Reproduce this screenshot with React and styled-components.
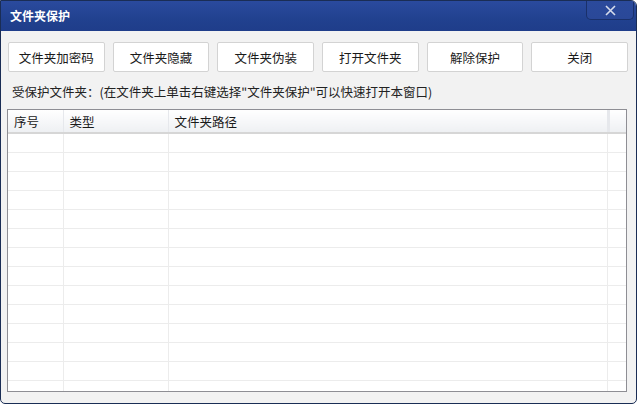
import React from "react";
import styled, { createGlobalStyle } from "styled-components";

const buttons = ["文件夹加密码", "文件夹隐藏", "文件夹伪装", "打开文件夹", "解除保护", "关闭"];
const rows = Array.from({ length: 14 });

export default function App() {
    return (
        <>
            <GlobalStyle />
            <Window>
                <TitleBar>
                    <Title>文件夹保护</Title>
                    <CloseButton>
                        <svg width="11" height="11" viewBox="0 0 11 11">
                            <path d="M1 1 L10 10 M10 1 L1 10" stroke="#d6dcec" strokeWidth="1.6" />
                        </svg>
                    </CloseButton>
                </TitleBar>
                <Body>
                    <Toolbar>
                        {buttons.map((b) => (
                            <Button key={b}>{b}</Button>
                        ))}
                    </Toolbar>
                    <Hint>受保护文件夹：(在文件夹上单击右键选择"文件夹保护"可以快速打开本窗口)</Hint>
                    <ListBox>
                        <Table>
                            <colgroup>
                                <col style={{ width: 55 }} />
                                <col style={{ width: 105 }} />
                                <col style={{ width: 439 }} />
                                <col />
                            </colgroup>
                            <thead>
                                <tr>
                                    <Th>序号</Th>
                                    <Th>类型</Th>
                                    <Th>文件夹路径</Th>
                                    <Th $filler />
                                </tr>
                            </thead>
                            <tbody>
                                {rows.map((_, i) => (
                                    <tr key={i}>
                                        <Td />
                                        <Td />
                                        <Td />
                                        <Td $last />
                                    </tr>
                                ))}
                            </tbody>
                        </Table>
                    </ListBox>
                </Body>
            </Window>
        </>
    );
}

const GlobalStyle = createGlobalStyle`
body {
    margin: 0;
    background: #ffffff;
    font-family: "Noto Sans CJK SC", "Liberation Sans", sans-serif;
}
`

const Window = styled.div`
    width: 635px;
    height: 402px;
    border: 1px solid #1a2d55;
    border-radius: 0 6px 5px 5px;
    background: #f2f2f2;
    overflow: hidden;
    display: flex;
    flex-direction: column;
`

const TitleBar = styled.div`
    height: 30px;
    flex: none;
    display: flex;
    justify-content: space-between;
    align-items: flex-start;
    background: linear-gradient(to bottom, #2a4a9e 0%, #21418f 60%, #1f3d8a 100%);
`

const Title = styled.div`
    color: #ffffff;
    font-size: 12px;
    font-weight: bold;
    line-height: 30px;
    padding-left: 9px;
`

const CloseButton = styled.div`
    width: 46px;
    height: 18px;
    margin-right: 2px;
    border: 1px solid #1a306a;
    border-top: none;
    border-radius: 0 0 5px 5px;
    background: linear-gradient(to bottom, #2b4a9c, #2a4898);
    display: flex;
    align-items: center;
    justify-content: center;
`

const Body = styled.div`
    flex: 1;
    display: flex;
    flex-direction: column;
    padding: 11px 8px 0 6px;
`

const Toolbar = styled.div`
    display: flex;
    gap: 8px;
    padding-left: 1px;
`

const Button = styled.div`
    flex: 1;
    height: 28px;
    border: 1px solid #d3d3d3;
    border-radius: 2px;
    background: #ffffff;
    display: flex;
    align-items: center;
    justify-content: center;
    font-size: 12.5px;
    color: #1a1a1a;
`

const Hint = styled.div`
    font-size: 12.5px;
    color: #222;
    line-height: 18px;
    margin: 11px 0 0 5px;
    height: 18px;
`

const ListBox = styled.div`
    margin-top: 8px;
    margin-right: 1px;
    height: 281px;
    border: 1px solid #8e8e94;
    background: #ffffff;
    overflow: hidden;
`

const Table = styled.table`
    width: 100%;
    table-layout: fixed;
    border-collapse: collapse;
`

const Th = styled.th`
    height: 22px;
    padding: 0 0 0 6px;
    text-align: left;
    font-weight: normal;
    font-size: 12.5px;
    color: #1a1a1a;
    background: linear-gradient(to bottom, #ffffff, #eef0f3);
    border-right: 1px solid ${(p) => (p.$filler ? "transparent" : "#e6e8ec")};
    border-bottom: 2px solid #d6d6d6;
    box-shadow: ${(p) => (p.$filler ? "inset 2px 0 0 #e6e8ec" : "none")};
`

const Td = styled.td`
    height: 18px;
    padding: 0;
    border-right: 1px solid ${(p) => (p.$last ? "transparent" : "#ececec")};
    border-bottom: 1px solid #ececec;
`
